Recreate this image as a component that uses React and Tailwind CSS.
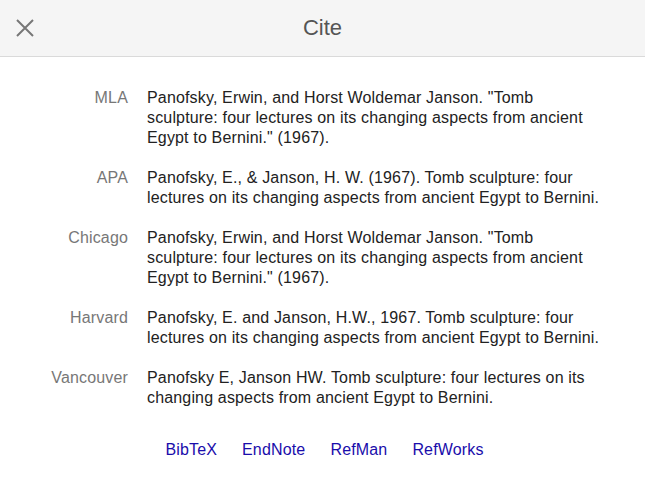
import React from 'react';

const citations = [
    { style: 'MLA', text: 'Panofsky, Erwin, and Horst Woldemar Janson. "Tomb sculpture: four lectures on its changing aspects from ancient Egypt to Bernini." (1967).' },
    { style: 'APA', text: 'Panofsky, E., & Janson, H. W. (1967). Tomb sculpture: four lectures on its changing aspects from ancient Egypt to Bernini.' },
    { style: 'Chicago', text: 'Panofsky, Erwin, and Horst Woldemar Janson. "Tomb sculpture: four lectures on its changing aspects from ancient Egypt to Bernini." (1967).' },
    { style: 'Harvard', text: 'Panofsky, E. and Janson, H.W., 1967. Tomb sculpture: four lectures on its changing aspects from ancient Egypt to Bernini.' },
    { style: 'Vancouver', text: 'Panofsky E, Janson HW. Tomb sculpture: four lectures on its changing aspects from ancient Egypt to Bernini.' },
];

const exports = ['BibTeX', 'EndNote', 'RefMan', 'RefWorks'];

function App() {
    return (
        <div className="w-[645px] h-[488px] bg-white font-['Liberation_Sans',Arial,sans-serif] overflow-hidden">
            {/* header */}
            <header className="relative h-[57px] bg-[#f5f5f5] border-b border-[#dadada] flex items-center justify-center">
                <button className="absolute left-[14px] top-[17px] w-[22px] h-[22px] flex items-center justify-center">
                    <svg width="20" height="20" viewBox="0 0 20 20" stroke="#777" strokeWidth="2" fill="none">
                        <path d="M2 2 L18 18 M18 2 L2 18" />
                    </svg>
                </button>
                <h1 className="text-[22px] text-[#555] leading-none">Cite</h1>
            </header>

            {/* citation list */}
            <div className="pt-[31px] flex flex-col gap-[20px]">
                {citations.map((c) => (
                    <div key={c.style} className="flex text-[16px] leading-[20px] tracking-[0.16px]">
                        <div className="w-[128px] text-right text-[#777] shrink-0">{c.style}</div>
                        <div className="w-[456px] ml-[19px] text-[#222]">{c.text}</div>
                    </div>
                ))}
            </div>

            {/* export links */}
            <div className="mt-[32px] pl-[4px] flex justify-center gap-[25px] text-[16px] leading-[20px] tracking-[0.16px]">
                {exports.map((e) => (
                    <a key={e} href="#" className="text-[#1a0dab]">{e}</a>
                ))}
            </div>
        </div>
    );
}

export default App;
